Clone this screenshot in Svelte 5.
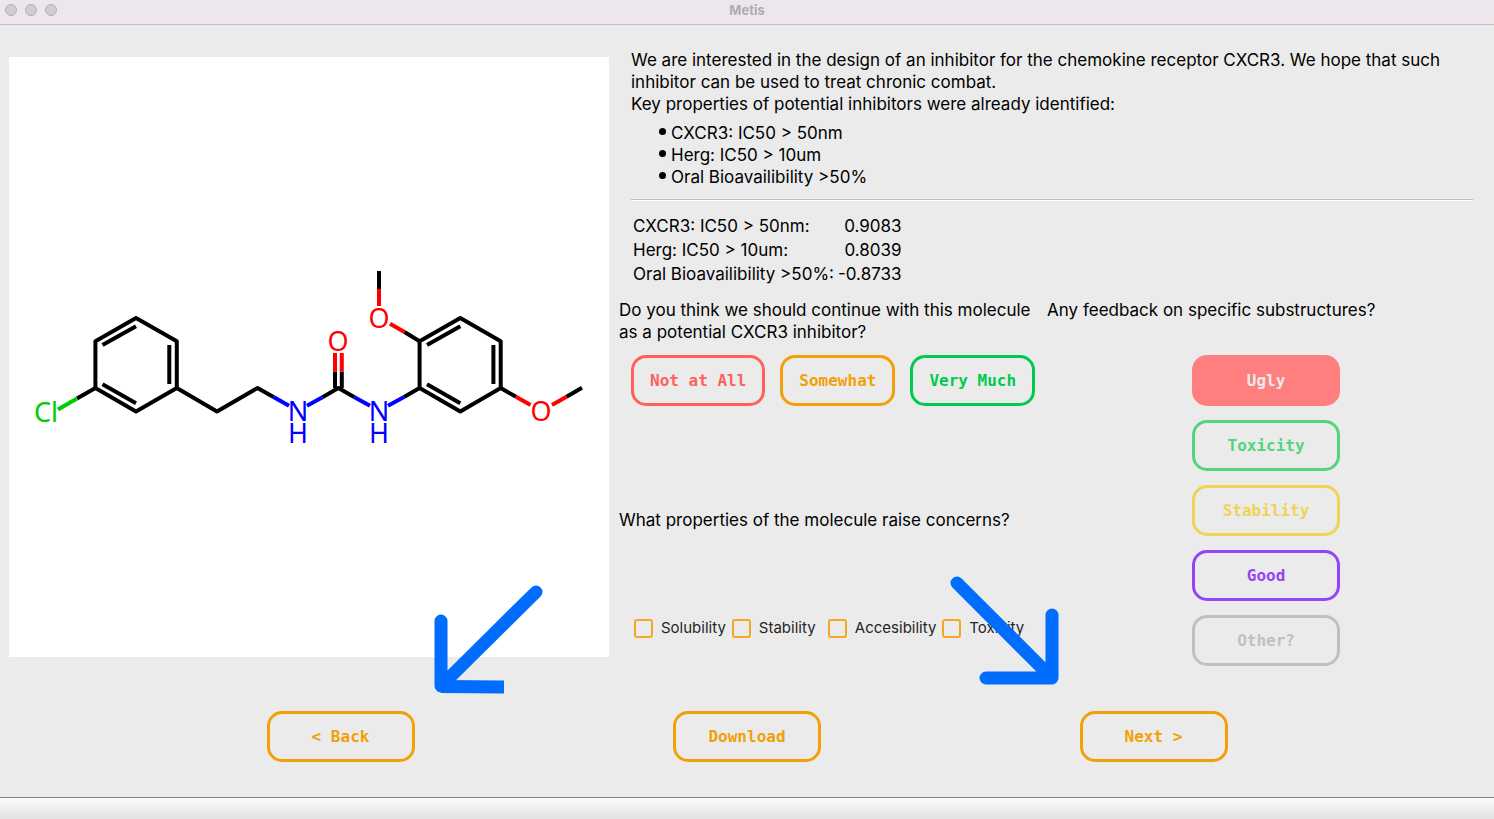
<script>
  const goals = ['CXCR3: IC50 > 50nm', 'Herg: IC50 > 10um', 'Oral Bioavailibility >50%'];
  const scores = [
    ['CXCR3: IC50 > 50nm:', '0.9083'],
    ['Herg: IC50 > 10um:', '0.8039'],
    ['Oral Bioavailibility >50%:', '-0.8733']
  ];
  const ratings = [
    { label: 'Not at All', tone: 'red' },
    { label: 'Somewhat', tone: 'orange' },
    { label: 'Very Much', tone: 'green' }
  ];
  const tags = [
    { label: 'Ugly', tone: 'ugly' },
    { label: 'Toxicity', tone: 'mint' },
    { label: 'Stability', tone: 'yellow' },
    { label: 'Good', tone: 'purple' },
    { label: 'Other?', tone: 'grey' }
  ];
  const concerns = ['Solubility', 'Stability', 'Accesibility', 'Toxicity'];
</script>

<div class="window">
  <header class="titlebar">
    <div class="lights"><i></i><i></i><i></i></div>
    <h1>Metis</h1>
  </header>

  <main>
    <div class="canvas">
      <svg viewBox="9 57 600 600" role="img" aria-label="Molecule">
        <g class="bond" stroke="#000">
          <path d="M136 318L176.8 341.3V388L136 411.4L95.4 388V341.3Z" />
          <path d="M136 326.2L102.5 345M169.3 345V384M136 403.2L102.5 384.3" />
          <path d="M95.4 388L77 398.6M176.8 388L217 411.4L257.5 388L273.5 397" />
          <path d="M322.5 397.2L338.4 388L354.5 397.2M335 388V371.5M341.8 388V371.5" />
          <path d="M404 397L419.6 388" />
          <path d="M460.3 318L500.7 341.3V388L460.3 411.4L419.6 388V341.3Z" />
          <path d="M460.3 326.2L427 345M493.4 345V384M460.3 403.2L427 384.3" />
          <path d="M419.6 341.3L404.5 332M379 271V289M500.7 388L516 396.8M566.5 396.8L582 387.8" />
        </g>
        <g class="bond" stroke="#00cc00"><path d="M77 398.6L58 409.5" /></g>
        <g class="bond" stroke="#0000ff">
          <path d="M273.5 397L289 405.8M307 405.8L322.5 397.2M354.5 397.2L370 405.8M388 405.8L404 397" />
        </g>
        <g class="bond" stroke="#ff0000">
          <path d="M335 371.5V353M341.8 371.5V353M379 289V306M390 323.8L404.5 332M516 396.8L530.5 405M552 405L566.5 396.8" />
        </g>
        <g class="atoms">
          <text x="46" y="422" fill="#00cc00">Cl</text>
          <text y="421" fill="#0000ff"><tspan x="298">N</tspan><tspan x="298" dy="22">H</tspan></text>
          <text y="421" fill="#0000ff"><tspan x="379">N</tspan><tspan x="379" dy="22">H</tspan></text>
          <text x="338" y="351" fill="#ff0000">O</text>
          <text x="379" y="328" fill="#ff0000">O</text>
          <text x="541" y="421" fill="#ff0000">O</text>
        </g>
      </svg>
    </div>

    <div class="panel">
      <section class="brief">
        <p>We are interested in the design of an inhibitor for the chemokine receptor CXCR3. We hope that such inhibitor can be used to treat chronic combat.</p>
        <p>Key properties of potential inhibitors were already identified:</p>
        <ul>
          {#each goals as goal}<li>{goal}</li>{/each}
        </ul>
        <hr />
        <table>
          <tbody>
            {#each scores as [name, value]}
              <tr><th scope="row">{name}</th><td>{value}</td></tr>
            {/each}
          </tbody>
        </table>
      </section>

      <div class="questions">
        <div class="column">
          <h2>Do you think we should continue with this molecule as a potential CXCR3 inhibitor?</h2>
          <div class="ratings">
            {#each ratings as r}<button type="button" class="btn {r.tone}">{r.label}</button>{/each}
          </div>
          <fieldset>
            <legend>What properties of the molecule raise concerns?</legend>
            <div class="checks">
              {#each concerns as c}
                <label><input type="checkbox" />{c}</label>
              {/each}
            </div>
          </fieldset>
        </div>
        <div class="column">
          <h2>Any feedback on specific substructures?</h2>
          <div class="tags">
            {#each tags as t}<button type="button" class="btn wide {t.tone}">{t.label}</button>{/each}
          </div>
        </div>
      </div>
    </div>
  </main>

  <nav>
    <div class="step">
      <button type="button" class="btn wide orange">&lt; Back</button>
      <svg class="arrow back" width="112" height="112" viewBox="432 584 112 112" aria-hidden="true">
        <path d="M535 592L440 686V621" stroke-linecap="round" />
        <path d="M440 686.5L503 687" />
      </svg>
    </div>
    <div class="step"><button type="button" class="btn wide orange">Download</button></div>
    <div class="step">
      <button type="button" class="btn wide orange">Next &gt;</button>
      <svg class="arrow next" width="112" height="112" viewBox="948 574 112 112" aria-hidden="true">
        <path d="M957 583L1052 678V615M1052 678H986" stroke-linecap="round" />
      </svg>
    </div>
  </nav>

  <footer></footer>
</div>

<style>
  :global(body) { margin: 0; background: #ebebeb; }
  .window {
    display: flex;
    flex-direction: column;
    min-height: 100vh;
    background: #ebebeb;
    color: #000;
    font: 17px/22px Inter, "Liberation Sans", sans-serif;
  }
  .titlebar {
    display: grid;
    grid-template-columns: 1fr auto 1fr;
    height: 24px;
    background: #ede7ed;
    border-bottom: 1px solid #c3c0c3;
  }
  .titlebar h1 {
    margin: 0;
    font-size: 13px;
    line-height: 20px;
    font-weight: 700;
    color: #b1acb1;
  }
  .lights { display: flex; gap: 8px; padding: 4px 5px; }
  .lights i {
    box-sizing: border-box;
    width: 12px;
    height: 12px;
    border: 1px solid #b4afb4;
    border-radius: 50%;
    background: #d1ccd1;
  }
  main {
    display: grid;
    grid-template-columns: 600fr 866fr;
    gap: 10px;
    padding: 24px 9px 0;
    flex: 1;
    align-items: start;
  }
  .canvas { margin-top: 8px; background: #fff; aspect-ratio: 1; }
  .canvas svg { display: block; width: 100%; }
  .bond { fill: none; stroke-width: 4; stroke-linejoin: round; }
  .atoms { font: 27px "Noto Sans", sans-serif; text-anchor: middle; }

  p, h2, ul { margin: 0; padding: 0; font-size: 17px; font-weight: 400; }
  .brief { padding: 0 12px; }
  ul { margin: 7px 0 11px; padding-left: 40px; }
  li { list-style: none; display: flex; }
  li::before {
    content: "";
    flex: none;
    width: 7px;
    height: 7px;
    margin: 6px 5px 0 -12px;
    border-radius: 50%;
    background: #000;
  }
  hr {
    height: 1px;
    margin: 0;
    border: 0;
    border-top: 1px solid #bdbdbd;
    background: #fff;
  }
  table { margin: 13px 0 13px 2px; border-collapse: collapse; }
  th, td { padding: 0; height: 24px; font-weight: 400; text-align: left; }
  td { padding-left: 4px; text-align: right; }

  .questions { display: grid; grid-template-columns: 427fr 438fr; }
  h2 { min-height: 44px; }
  .ratings { display: flex; gap: 15px; padding: 12px 12px 0; }
  .tags { display: flex; flex-direction: column; align-items: center; gap: 14px; padding-top: 12px; }
  .btn {
    height: 51px;
    padding: 0 16px;
    border: 3px solid currentColor;
    border-radius: 15px;
    background: transparent;
    font: bold 16px/22px "DejaVu Sans Mono", monospace;
    white-space: nowrap;
  }
  .wide { width: 148px; }
  .red { color: #ff605c; }
  .orange { color: #f2a007; }
  .green { color: #00ca4e; }
  .ugly { color: #ebebeb; background: #ff7f7f; border-color: #ff7f7f; }
  .mint { color: #51d67c; }
  .yellow { color: #f0d354; }
  .purple { color: #9742f5; }
  .grey { color: #c0c0c0; }

  fieldset { margin: 103px 0 0; padding: 0; border: 0; min-width: 0; }
  legend { padding: 0; }
  .checks { display: flex; gap: 6px; padding: 86px 0 0 15px; }
  label {
    display: flex;
    align-items: center;
    gap: 8px;
    min-width: 90px;
    font-size: 15px;
    color: #262626;
    white-space: nowrap;
  }
  input {
    appearance: none;
    flex: none;
    width: 19px;
    height: 19px;
    margin: 0;
    border: 2px solid #f5a623;
    border-radius: 3px;
  }

  nav { display: flex; justify-content: space-evenly; padding: 45px 8px 35px; }
  .step { position: relative; height: 51px; }
  .arrow {
    position: absolute;
    fill: none;
    stroke: #006dff;
    stroke-width: 13;
    stroke-linejoin: round;
    pointer-events: none;
  }
  .back { left: 166px; bottom: 66px; }
  .next { right: 168px; bottom: 76px; }

  footer {
    height: 21px;
    border-top: 1px solid #838383;
    background: linear-gradient(#fafafa, #e3e3e3);
  }
</style>
